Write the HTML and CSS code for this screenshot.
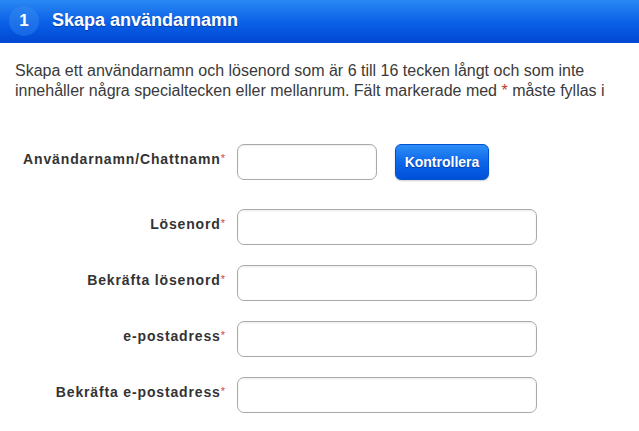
FILE: index.html
```html
<!DOCTYPE html>
<html lang="sv">
<head>
<meta charset="utf-8">
<title>Skapa användarnamn</title>
<link rel="stylesheet" href="styles.css">
</head>
<body>
<div class="step-header">
  <span class="step-num">1</span>
  <h1 class="step-title">Skapa användarnamn</h1>
</div>
<p class="intro">Skapa ett användarnamn och lösenord som är 6 till 16 tecken långt och som inte innehåller några specialtecken eller mellanrum. Fält markerade med <span class="req-inline">*</span> måste fyllas i</p>
<form class="reg-form">
  <label class="field-label first">Användarnamn/Chattnamn<span class="req">*</span></label>
  <div class="field-cell first">
    <input class="field short" type="text">
    <button type="button" class="btn-check">Kontrollera</button>
  </div>
  <label class="field-label">Lösenord<span class="req">*</span></label>
  <div class="field-cell"><input class="field" type="password"></div>
  <label class="field-label">Bekräfta lösenord<span class="req">*</span></label>
  <div class="field-cell"><input class="field" type="password"></div>
  <label class="field-label">e-postadress<span class="req">*</span></label>
  <div class="field-cell"><input class="field" type="text"></div>
  <label class="field-label">Bekräfta e-postadress<span class="req">*</span></label>
  <div class="field-cell"><input class="field" type="text"></div>
</form>
</body>
</html>
```
FILE: styles.css
```css
html, body {
  margin: 0;
  padding: 0;
  background: #fff;
  font-family: "Liberation Sans", Arial, sans-serif;
}
.step-header {
  height: 43px;
  display: flex;
  align-items: center;
  padding-left: 9px;
  background: linear-gradient(to bottom, #2a88f4 0%, #0a5fe6 55%, #0047d2 100%);
}
.step-num {
  width: 30px;
  height: 30px;
  border-radius: 50%;
  background: linear-gradient(to bottom, #2b84f0, #1566e6);
  color: #fff;
  font-weight: bold;
  font-size: 17px;
  display: flex;
  align-items: center;
  justify-content: center;
  margin-top: -1px;
}
.step-title {
  margin: -2px 0 0 13px;
  color: #fff;
  font-size: 18px;
  font-weight: bold;
  text-shadow: 0 1px 1px rgba(0,0,40,0.35);
}
.intro {
  margin: 18px 0 0 0;
  padding: 0 15px;
  font-size: 16px;
  line-height: 20px;
  color: #3a3a3a;
}
.req-inline {
  color: #c0392b;
}
.reg-form {
  margin-top: 43px;
  display: grid;
  grid-template-columns: 225px 1fr;
  column-gap: 12px;
  row-gap: 20px;
}
.first {
  margin-bottom: 9px;
}
.field-label {
  text-align: right;
  font-size: 14px;
  line-height: 16px;
  font-weight: bold;
  letter-spacing: 0.85px;
  color: #333;
  padding-top: 7px;
  white-space: nowrap;
}
.req {
  color: #c94a4a;
  font-size: 11px;
  font-weight: normal;
  vertical-align: top;
  line-height: 14px;
  letter-spacing: 0;
}
.field-cell {
  display: flex;
  align-items: center;
  gap: 18px;
}
.field {
  box-sizing: border-box;
  width: 300px;
  height: 36px;
  border: 1px solid #a9a9a9;
  border-radius: 7px;
  background: #fff;
  margin: 0;
  padding: 0 8px;
  box-shadow: inset 0 1px 2px rgba(0,0,0,0.08);
}
.field.short {
  width: 140px;
}
.btn-check {
  box-sizing: border-box;
  width: 94px;
  height: 36px;
  border: 1px solid #0050d0;
  border-radius: 6px;
  background: linear-gradient(to bottom, #2d8ff6 0%, #0a63e8 55%, #0050d8 100%);
  color: #fff;
  font-family: "Liberation Sans", Arial, sans-serif;
  font-weight: bold;
  font-size: 14px;
  text-shadow: 0 1px 1px rgba(0,0,40,0.4);
  padding: 0;
  box-shadow: 0 1px 2px rgba(0,0,0,0.2);
}
```
